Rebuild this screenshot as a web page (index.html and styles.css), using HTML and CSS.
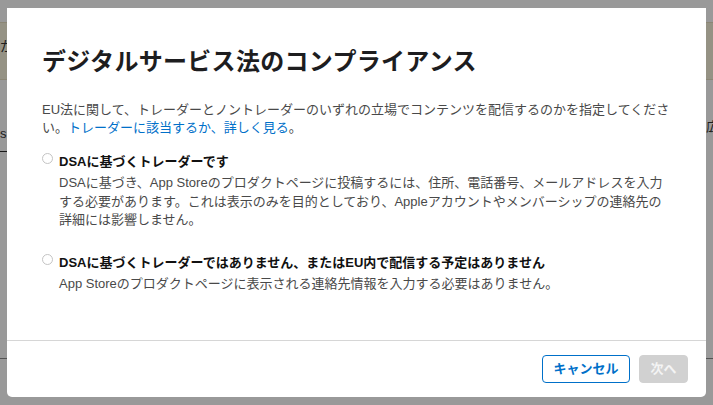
FILE: index.html
```html
<!DOCTYPE html>
<html lang="ja">
<head>
<meta charset="utf-8">
<title>デジタルサービス法のコンプライアンス</title>
<link rel="stylesheet" href="styles.css">
</head>
<body>
<div class="page">
  <div class="notice"><span class="notice-text">か</span></div>
  <div class="page-row"><span class="page-left">s.</span><span class="page-right">広告</span></div>
  <div class="page-rule"></div>
  <div class="page-rule page-rule-low"></div>
</div>
<div class="overlay">
  <div class="modal" role="dialog" aria-labelledby="dsa-title">
    <div class="modal-body">
      <h1 class="title" id="dsa-title">デジタルサービス法のコンプライアンス</h1>
      <p class="intro">EU法に関して、トレーダーとノントレーダーのいずれの立場でコンテンツを配信するのかを指定してくださ<br>い。<a class="link" href="#">トレーダーに該当するか、詳しく見る</a>。</p>
      <div class="options">
        <label class="option">
          <span class="radio"></span>
          <span class="option-text">
            <span class="option-title">DSAに基づくトレーダーです</span>
            <span class="option-desc">DSAに基づき、App Storeのプロダクトページに投稿するには、住所、電話番号、メールアドレスを入力<br>する必要があります。これは表示のみを目的としており、Appleアカウントやメンバーシップの連絡先の<br>詳細には影響しません。</span>
          </span>
        </label>
        <label class="option">
          <span class="radio"></span>
          <span class="option-text">
            <span class="option-title">DSAに基づくトレーダーではありません、またはEU内で配信する予定はありません</span>
            <span class="option-desc">App Storeのプロダクトページに表示される連絡先情報を入力する必要はありません。</span>
          </span>
        </label>
      </div>
    </div>
    <div class="modal-footer">
      <button class="btn btn-secondary" type="button">キャンセル</button>
      <button class="btn btn-disabled" type="button" disabled>次へ</button>
    </div>
  </div>
</div>
</body>
</html>
```

FILE: styles.css
```css
* { box-sizing: border-box; }

html, body {
  margin: 0;
  padding: 0;
  width: 713px;
  height: 405px;
  overflow: hidden;
}

body {
  font-family: "Liberation Sans", "Noto Sans CJK JP", sans-serif;
  background: #ffffff;
  color: #1d1d1f;
}

/* underlying page (dimmed by the overlay) */
.page {
  display: flex;
  flex-direction: column;
  height: 405px;
}

.notice {
  margin-top: 22px;
  height: 58px;
  background: #f9f3dd;
  border-top: 1px solid #e8e0c4;
  border-bottom: 1px solid #e8e0c4;
  display: flex;
  align-items: center;
  padding-bottom: 12px;
  font-size: 14px;
  color: #333;
}

.page-row {
  margin-top: 38px;
  display: grid;
  grid-template-columns: 706px 1fr;
  align-items: start;
  font-size: 13px;
  line-height: 18px;
  color: #333;
  overflow: hidden;
}

.page-left { padding-top: 7px; }

.page-right { white-space: nowrap; }

.page-rule {
  margin-top: 8px;
  height: 1px;
  background: #2b2b2b;
  width: 10px;
}

.page-rule-low {
  margin-top: 206px;
  width: 713px;
  background: #8a8a8a;
}

/* overlay + modal */
.overlay {
  position: fixed;
  inset: 0;
  background: rgba(0, 0, 0, 0.4);
  display: flex;
  align-items: center;
  justify-content: center;
}

.modal {
  width: 699px;
  height: 389px;
  background: #ffffff;
  border-radius: 0 0 5px 5px;
  display: flex;
  flex-direction: column;
}

.modal-body {
  flex: 1;
  padding: 39px 35px 0 35px;
}

.title {
  margin: 0;
  font-size: 24px;
  line-height: 30px;
  font-weight: 700;
  letter-spacing: 0.3px;
  color: #1d1d1f;
  white-space: nowrap;
}

.intro {
  margin: 24px 0 0;
  font-size: 13px;
  line-height: 18px;
  color: #494949;
  white-space: nowrap;
}

.link {
  color: #0070c9;
  text-decoration: none;
}

.options {
  margin-top: 16px;
  display: flex;
  flex-direction: column;
  gap: 24.5px;
}

.option {
  display: grid;
  grid-template-columns: 11px 1fr;
  column-gap: 6px;
  align-items: start;
}

.radio {
  width: 11px;
  height: 11px;
  border: 1px solid #c4c4c4;
  border-radius: 50%;
  background: #fff;
}

.option-text {
  display: flex;
  flex-direction: column;
  gap: 3px;
}

.option-title {
  font-size: 13px;
  line-height: 18px;
  font-weight: 700;
  color: #111111;
  white-space: nowrap;
}

.option-desc {
  font-size: 13px;
  line-height: 18.5px;
  color: #494949;
  white-space: nowrap;
}

.modal-footer {
  border-top: 1px solid #d6d6d6;
  padding: 14px 18px 14px 0;
  display: flex;
  justify-content: flex-end;
  gap: 9px;
}

.btn {
  height: 28px;
  border-radius: 4px;
  font-family: inherit;
  font-size: 13px;
  font-weight: 700;
  padding: 0;
  line-height: 26px;
}

.btn-secondary {
  width: 88px;
  background: #ffffff;
  color: #0070c9;
  border: 1px solid #0070c9;
}

.btn-disabled {
  width: 49px;
  background: #d1d1d1;
  color: #f4f4f4;
  border: 1px solid #d1d1d1;
}
```
